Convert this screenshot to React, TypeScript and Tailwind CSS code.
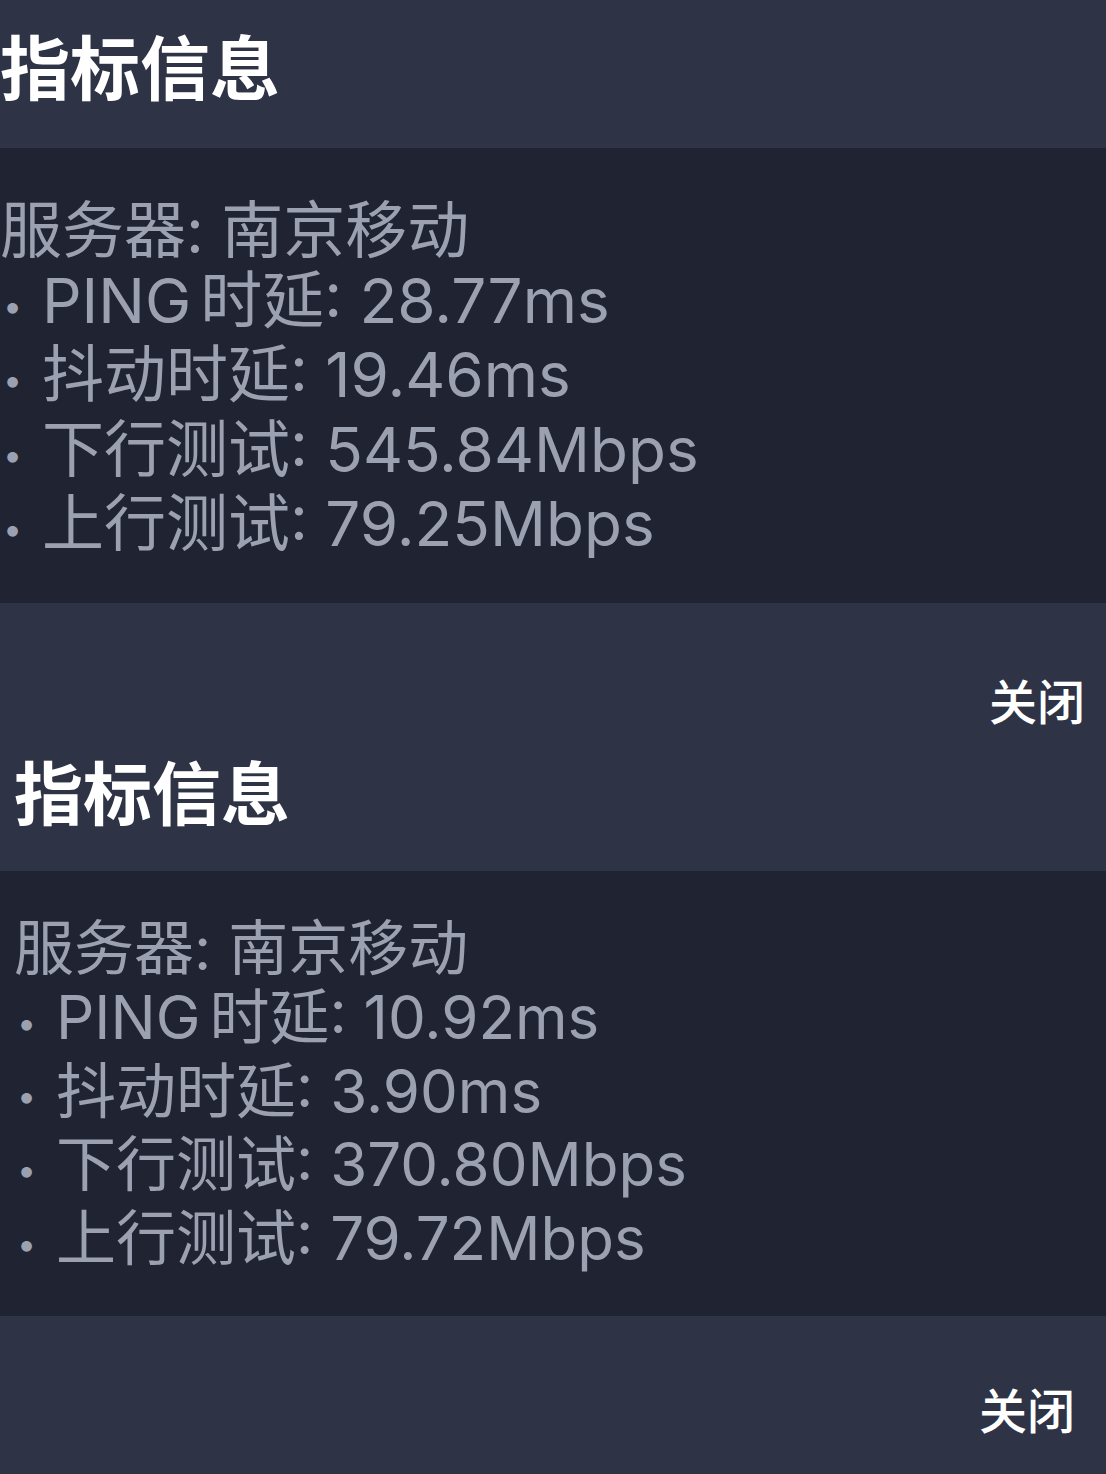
import React from "react"

interface Metric {
  label: string
  value: string
}

interface Result {
  server: string
  metrics: Metric[]
}

const results: Result[] = [
  {
    server: "南京移动",
    metrics: [
      { label: "PING时延", value: "28.77ms" },
      { label: "抖动时延", value: "19.46ms" },
      { label: "下行测试", value: "545.84Mbps" },
      { label: "上行测试", value: "79.25Mbps" },
    ],
  },
  {
    server: "南京移动",
    metrics: [
      { label: "PING时延", value: "10.92ms" },
      { label: "抖动时延", value: "3.90ms" },
      { label: "下行测试", value: "370.80Mbps" },
      { label: "上行测试", value: "79.72Mbps" },
    ],
  },
]

const font = "font-['Inter','Noto_Sans_CJK_SC',sans-serif]"

// iOS puts a little space between latin and CJK runs
function Label({ text }: { text: string }) {
  const m = text.match(/^([A-Za-z]+)(.*)$/)
  if (!m) return <>{text}</>
  return (
    <>
      {m[1]}
      <span className="ml-[9px]">{m[2]}</span>
    </>
  )
}

function Panel({ result, second }: { result: Result; second?: boolean }) {
  // fixed row height so mixed latin/CJK fallback doesn't grow the line boxes
  const row = second ? "h-[73.75px]" : "h-[74.5px]"

  return (
    <section className={font}>
      <header
        className={
          second
            ? "h-[144px] bg-[#2e3346] pl-[14px] pt-[17px]"
            : "h-[148px] bg-[#2e3346] pt-[19px]"
        }
      >
        <h2
          className={
            second
              ? "text-[69px] leading-[92px] font-bold text-white font-['Noto_Sans_CJK_SC',sans-serif]"
              : "text-[70px] leading-[92px] font-bold text-white font-['Noto_Sans_CJK_SC',sans-serif]"
          }
        >
          指标信息
        </h2>
      </header>

      <div
        className={
          second
            ? "bg-[#202432] pl-[14px] pt-[36px] pb-[40px] text-[60px] leading-[73.75px] text-[#9ba1b1]"
            : "bg-[#202432] pt-[41px] pb-[41.5px] text-[62px] leading-[74.5px] text-[#9ba1b1]"
        }
      >
        <p className={row}>
          <span className="font-['Noto_Sans_CJK_SC',sans-serif]">服务器</span>: {result.server}
        </p>
        {result.metrics.map((m) => (
          <p key={m.label} className={`${row} flex items-start`}>
            <span className="w-[42px] shrink-0 self-center pl-[3px] pt-[10px] text-[34px] leading-none">•</span>
            <span>
              <Label text={m.label} />: {m.value}
            </span>
          </p>
        ))}
      </div>

      <footer
        className={
          second
            ? "h-[158px] bg-[#2e3346] flex items-start justify-end pr-[31px] pt-[68px]"
            : "h-[124px] bg-[#2e3346] flex items-start justify-end pr-[21px] pt-[72px]"
        }
      >
        <button className="text-[48px] leading-[48px] text-white font-medium font-['Noto_Sans_CJK_SC',sans-serif]">
          关闭
        </button>
      </footer>
    </section>
  )
}

export default function App() {
  return (
    <div className="w-[1106px] h-[1474px] overflow-hidden bg-[#2e3346]">
      <Panel result={results[0]} />
      <Panel result={results[1]} second />
    </div>
  )
}
